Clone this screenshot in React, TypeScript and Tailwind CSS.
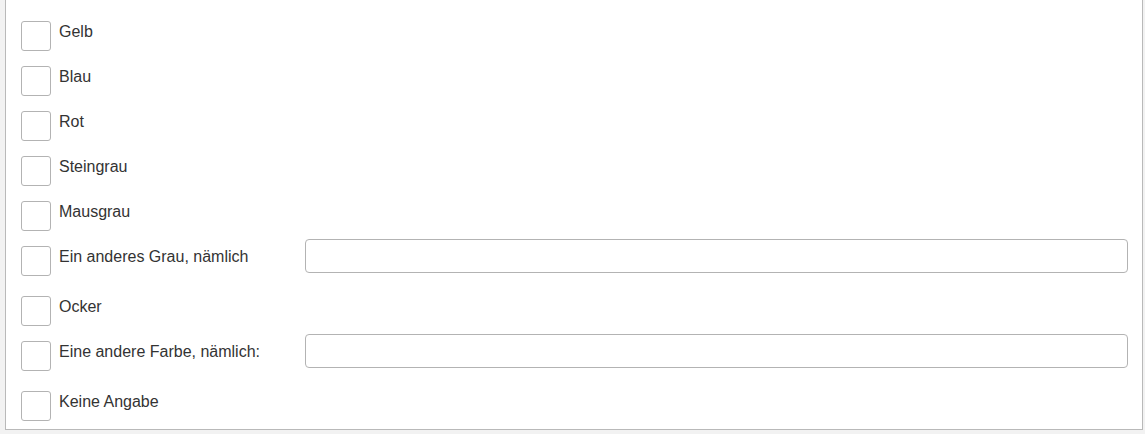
import { useState } from 'react';

interface Option {
  label: string;
  withInput?: boolean;
}

const options: Option[] = [
  { label: 'Gelb' },
  { label: 'Blau' },
  { label: 'Rot' },
  { label: 'Steingrau' },
  { label: 'Mausgrau' },
  { label: 'Ein anderes Grau, nämlich', withInput: true },
  { label: 'Ocker' },
  { label: 'Eine andere Farbe, nämlich:', withInput: true },
  { label: 'Keine Angabe' },
];

function OptionRow({ option }: { option: Option }) {
  const [checked, setChecked] = useState(false);
  const [text, setText] = useState('');

  return (
    <div className={`flex items-start ${option.withInput ? 'h-[50px]' : 'h-[45px]'}`}>
      <button
        type="button"
        onClick={() => setChecked(!checked)}
        className="w-[30px] h-[30px] shrink-0 rounded-[3px] border border-[#b3b3b3] bg-white flex items-center justify-center"
      >
        {checked && (
          <svg width="18" height="18" viewBox="0 0 24 24" fill="none" stroke="#333" strokeWidth="3">
            <path d="M4 12l5 5L20 6" />
          </svg>
        )}
      </button>
      <span className="ml-[8px] pt-[1px] text-[16px] leading-[20px] text-[#333] w-[238px] shrink-0">
        {option.label}
      </span>
      {option.withInput && (
        <input
          value={text}
          onChange={(e) => setText(e.target.value)}
          className="-mt-[7px] ml-[8px] h-[34px] flex-1 rounded-[4px] border border-[#b3b3b3] bg-white px-2 text-[16px] outline-none"
        />
      )}
    </div>
  );
}

export default function App() {
  return (
    <div className="w-[1145px] h-[434px] bg-[#f2f2f2] pl-[5px] pr-[2px] pb-[4px] overflow-hidden" style={{ fontFamily: '"Liberation Sans", Arial, sans-serif' }}>
      <div className="h-full bg-white border-l border-r border-b border-[#b9b9b9] pl-[15px] pr-[14px] pt-[21px]">
        {options.map((o) => (
          <OptionRow key={o.label} option={o} />
        ))}
      </div>
    </div>
  );
}
